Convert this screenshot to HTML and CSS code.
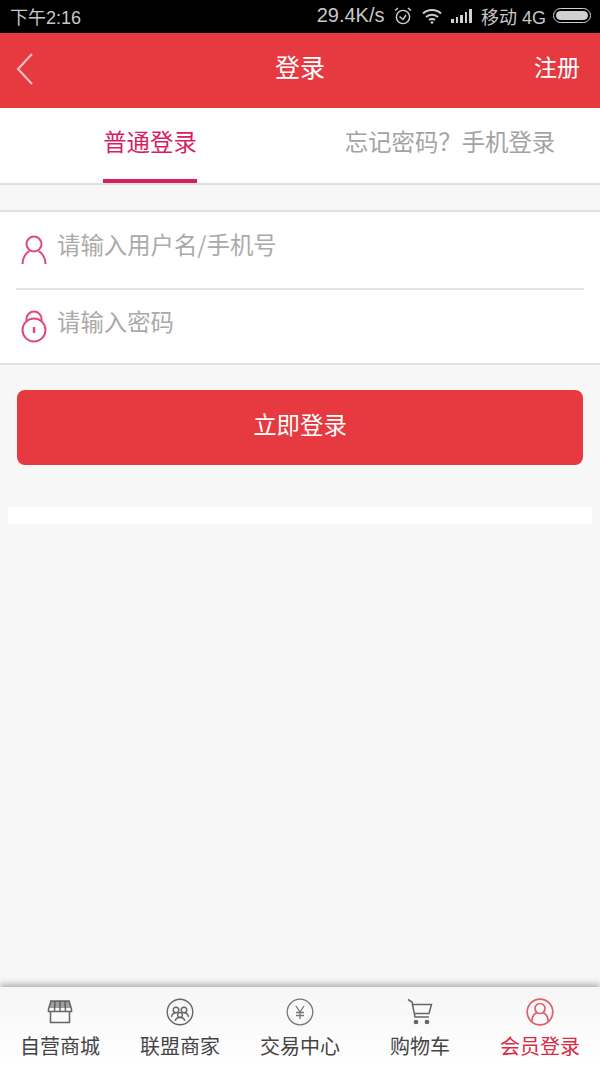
FILE: index.html
```html
<!DOCTYPE html>
<html lang="zh-CN">
<head>
    <meta charset="UTF-8">
    <meta name="viewport" content="width=device-width, initial-scale=1.0">
    <title>登录</title>
    <link rel="stylesheet" href="styles.css">
</head>
<body>
    <!-- 状态栏 -->
    <div class="statusbar">
        <span class="status-time">下午2:16</span>
        <div class="status-right">
            <span class="status-speed">29.4K/s</span>
            <svg class="status-icon" width="20" height="20" viewBox="0 0 20 20" fill="none" stroke="#d0d0d0" stroke-width="1.4">
                <circle cx="10" cy="11" r="6.6"/>
                <path d="M6.5 10.5l3.5 3 3-4.5M2 4.5l3-2.5M18 4.5l-3-2.5"/>
            </svg>
            <svg class="status-icon" width="22" height="18" viewBox="0 0 22 18" fill="none" stroke="#d0d0d0" stroke-width="2">
                <path d="M2 6.5c5-4.6 13-4.6 18 0M5 10c3.400-3 8.600-3 12 0M8 13c1.800-1.300 4.200-1.300 6 0"/>
                <circle cx="11" cy="15.500" r="1.300" fill="#d0d0d0" stroke="none"/>
            </svg>
            <div class="signal">
                <i class="s1"></i><i class="s2"></i><i class="s3"></i><i class="s4"></i><i class="s5"></i>
            </div>
            <span class="status-carrier">移动 4G</span>
            <div class="battery"><div class="battery-fill"></div></div>
        </div>
    </div>

    <!-- 标题栏 -->
    <header class="topbar">
        <svg class="back" width="20" height="34" viewBox="0 0 20 34" fill="none" stroke="#f6bcbc" stroke-width="2.2">
            <path d="M17 2L3 17l14 15"/>
        </svg>
        <h1>登录</h1>
        <a class="topbar-link">注册</a>
    </header>

    <div class="tabs">
        <div class="tab active"><span>普通登录</span></div>
        <div class="tab"><span>忘记密码？手机登录</span></div>
    </div>

    <div class="form">
        <div class="field">
            <svg width="26" height="30" viewBox="0 0 26 30" fill="none" stroke="#dd4a78" stroke-width="2">
                <circle cx="13" cy="9" r="7.500"/>
                <path d="M1.500 29c0-7 4-11.500 7-12.800M24.500 29c0-7-4-11.500-7-12.800"/>
            </svg>
            <span>请输入用户名/手机号</span>
        </div>
        <div class="field">
            <svg width="26" height="33" viewBox="0 0 26 33" fill="none" stroke="#dd4a78" stroke-width="2">
                <circle cx="13" cy="20" r="11.500"/>
                <path d="M5.500 11.500V9a7.500 7.500 0 0 1 15 0v2.500"/>
                <path d="M13 17v6" stroke-width="2.400"/>
            </svg>
            <span>请输入密码</span>
        </div>
    </div>

    <button class="submit"><span>立即登录</span></button>

    <div class="strip"></div>

    <div class="spacer"></div>

    <!-- 底部导航 -->
    <nav class="tabbar">
        <div class="nav-item">
            <svg width="28" height="28" viewBox="0 0 28 28" fill="none" stroke="#666" stroke-width="1.500">
                <path d="M4.500 14v10.500h19V14M5 3h18l2.500 8v2.500h-23V11zM9 3l-.5 10M14 3v10M19 3l.5 10"/>
                <path d="M5 3h18l2 7H3z" fill="#555" stroke="none" opacity=".55"/>
            </svg>
            <span>自营商城</span>
        </div>
        <div class="nav-item">
            <svg width="28" height="28" viewBox="0 0 28 28" fill="none" stroke="#666" stroke-width="1.400">
                <circle cx="14" cy="14" r="12.800"/>
                <circle cx="10" cy="12" r="2.800"/>
                <circle cx="18" cy="12" r="2.800"/>
                <circle cx="14" cy="17" r="2.400"/>
                <path d="M5.500 19c.5-3 2-4 4-4M22.500 19c-.5-3-2-4-4-4M9.500 23c0-2.500 2-3.500 4.500-3.500s4.500 1 4.500 3.500"/>
            </svg>
            <span>联盟商家</span>
        </div>
        <div class="nav-item">
            <svg width="28" height="28" viewBox="0 0 28 28" fill="none" stroke="#777" stroke-width="1.300">
                <circle cx="14" cy="14" r="12.800"/>
                <path d="M10 8l4 6 4-6M14 14v7M10 14.500h8M10 17.500h8"/>
            </svg>
            <span>交易中心</span>
        </div>
        <div class="nav-item">
            <svg width="28" height="28" viewBox="0 0 28 28" fill="none" stroke="#666" stroke-width="1.500">
                <path d="M2 1.500l4 2.500 3 15h14M6.500 6.500h19l-2.500 9H8.500"/>
                <circle cx="10" cy="24" r="1.600" fill="#666"/>
                <circle cx="21" cy="24" r="1.600" fill="#666"/>
            </svg>
            <span>购物车</span>
        </div>
        <div class="nav-item active">
            <svg width="28" height="28" viewBox="0 0 28 28" fill="none" stroke="#e0606c" stroke-width="1.700">
                <circle cx="14" cy="14" r="12.800"/>
                <circle cx="14" cy="10.500" r="5"/>
                <path d="M6 23c0-5 2.500-7.500 5-8.500M22 23c0-5-2.500-7.500-5-8.500"/>
            </svg>
            <span>会员登录</span>
        </div>
    </nav>
</body>
</html>
```

FILE: styles.css
```css
* {
    box-sizing: border-box;
}
html, body {
    height: 100%;
}
body {
    margin: 0;
    display: flex;
    flex-direction: column;
    font-family: "Noto Sans CJK SC", "Liberation Sans", sans-serif;
    background-color: #f7f7f7;
}
.statusbar {
    height: 33px;
    flex-shrink: 0;
    display: flex;
    justify-content: space-between;
    align-items: center;
    padding: 0 9px 2px 10px;
    background-color: #000;
    color: #c8c8c8;
    font-family: "Liberation Sans", "Noto Sans CJK SC", sans-serif;
    font-size: 18px;
}
.status-right {
    display: flex;
    align-items: center;
}
.status-speed {
    margin-right: 9px;
    font-size: 20px;
}
.status-icon {
    margin-right: 8px;
}
.signal {
    display: flex;
    align-items: flex-end;
    gap: 2px;
    height: 14px;
    margin-right: 9px;
}
.signal i {
    width: 2.500px;
    background-color: #d0d0d0;
}
.s1 { height: 4px; }
.s2 { height: 6px; }
.s3 { height: 8px; }
.s4 { height: 11px; }
.s5 { height: 14px; }
.status-carrier {
    margin-right: 7px;
}
.battery {
    width: 38px;
    height: 15px;
    padding: 2px;
    border: 1px solid #d0d0d0;
    border-radius: 8px;
}
.battery-fill {
    height: 100%;
    width: 100%;
    background-color: #d0d0d0;
    border-radius: 5px;
}
.topbar {
    height: 75px;
    flex-shrink: 0;
    display: flex;
    align-items: center;
    justify-content: center;
    position: relative;
    background-color: #e63940;
    color: #fff;
}
.topbar h1 {
    margin: 0;
    padding-bottom: 10px;
    font-size: 25px;
    font-weight: 400;
}
.back {
    position: absolute;
    left: 15px;
    top: 19px;
}
.topbar-link {
    position: absolute;
    right: 20px;
    top: 16px;
    font-size: 23px;
}
.tabs {
    height: 77px;
    flex-shrink: 0;
    display: flex;
    background-color: #fff;
    border-bottom: 2px solid #e0e0e0;
    font-size: 23.400px;
}
.tab {
    flex: 1;
    display: flex;
    justify-content: center;
    color: #a3a3a3;
}
.tab:first-child {
    flex: 0 0 300px;
}
.tab span {
    height: 75px;
    line-height: 66px;
}
.tab.active {
    color: #d81e63;
}
.tab.active span {
    border-bottom: 4px solid #d81e63;
}
.form {
    margin-top: 25px;
    flex-shrink: 0;
    background-color: #fff;
    border-top: 2px solid #e2e2e2;
    border-bottom: 2px solid #e2e2e2;
    padding: 0 16px;
}
.field {
    height: 75.500px;
    display: flex;
    align-items: center;
    gap: 10px;
    padding-left: 5px;
    color: #aaa;
    font-size: 23.400px;
}
.field span {
    padding-bottom: 11px;
}
.field svg {
    flex-shrink: 0;
}
.field + .field {
    border-top: 2px solid #e2e2e2;
}
.submit {
    display: block;
    flex-shrink: 0;
    margin: 25px 17px 0;
    height: 75px;
    padding: 0 0 7px;
    border: 0;
    border-radius: 8px;
    background-color: #e63940;
    color: #fff;
    font-family: inherit;
    font-size: 23.400px;
}
.strip {
    flex-shrink: 0;
    height: 17px;
    margin: 42px 8px 0;
    background-color: #fff;
}
.spacer {
    flex: 1;
}
.tabbar {
    height: 80px;
    flex-shrink: 0;
    display: flex;
    background: linear-gradient(to bottom, #f6f6f6, #fff);
    box-shadow: 0 -3px 6px rgba(0, 0, 0, 0.28);
}
.nav-item {
    flex: 1;
    display: flex;
    flex-direction: column;
    align-items: center;
    padding-top: 11px;
    color: #444;
    font-size: 20px;
}
.nav-item span {
    line-height: 30px;
    margin-top: 5px;
}
.nav-item.active {
    color: #d92b45;
}
```
